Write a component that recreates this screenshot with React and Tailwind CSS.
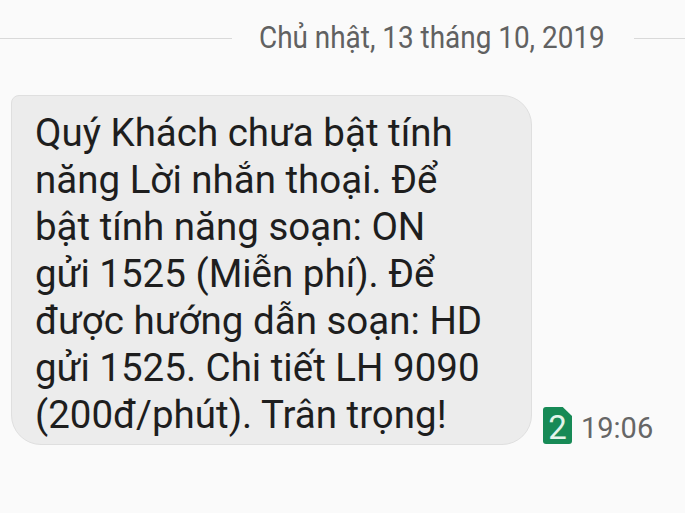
export default function App() {
  const lines = [
    "Quý Khách chưa bật tính",
    "năng Lời nhắn thoại. Để",
    "bật tính năng soạn: ON",
    "gửi 1525 (Miễn phí). Để",
    "được hướng dẫn soạn: HD",
    "gửi 1525. Chi tiết LH 9090",
    "(200đ/phút). Trân trọng!",
  ];
  return (
    <div className="w-[685px] h-[513px] bg-[#fafafa] overflow-hidden font-['Roboto',sans-serif]">
      <div className="flex items-center pt-[20px] h-[56px]">
        <div className="w-[232px] h-px bg-[#d9d9d9]" />
        <div className="ml-[27px] w-[346px] whitespace-nowrap text-[31px] leading-[36px] text-[#616161] scale-x-[0.9] origin-left">
          Chủ nhật, 13 tháng 10, 2019
        </div>
        <div className="ml-[29px] flex-1 h-px bg-[#d9d9d9]" />
      </div>
      <div className="flex items-end mt-[39px]">
        <div className="ml-[11px] w-[521px] shrink-0 bg-[#ececec] border border-[#dfdfdf] rounded-tl-[8px] rounded-tr-[30px] rounded-b-[30px] pl-[23px] pt-[13px] pb-[6px] text-[38.5px] leading-[47px] text-[#1e1e1e] whitespace-nowrap">
          {lines.map((l, i) => (
            <div key={i}>{l}</div>
          ))}
        </div>
        <div className="flex items-end ml-[11px] mb-[1px]">
          <div className="w-[29px] h-[37px] bg-[#178a56] rounded-[3px] [clip-path:polygon(0_0,68%_0,100%_24%,100%_100%,0_100%)] flex items-center justify-center text-[#e3f4ea] text-[33px] leading-none pt-[3px]">
            2
          </div>
          <div className="ml-[9px] text-[29px] leading-[32px] text-[#666666] whitespace-nowrap">
            19:06
          </div>
        </div>
      </div>
    </div>
  );
}
